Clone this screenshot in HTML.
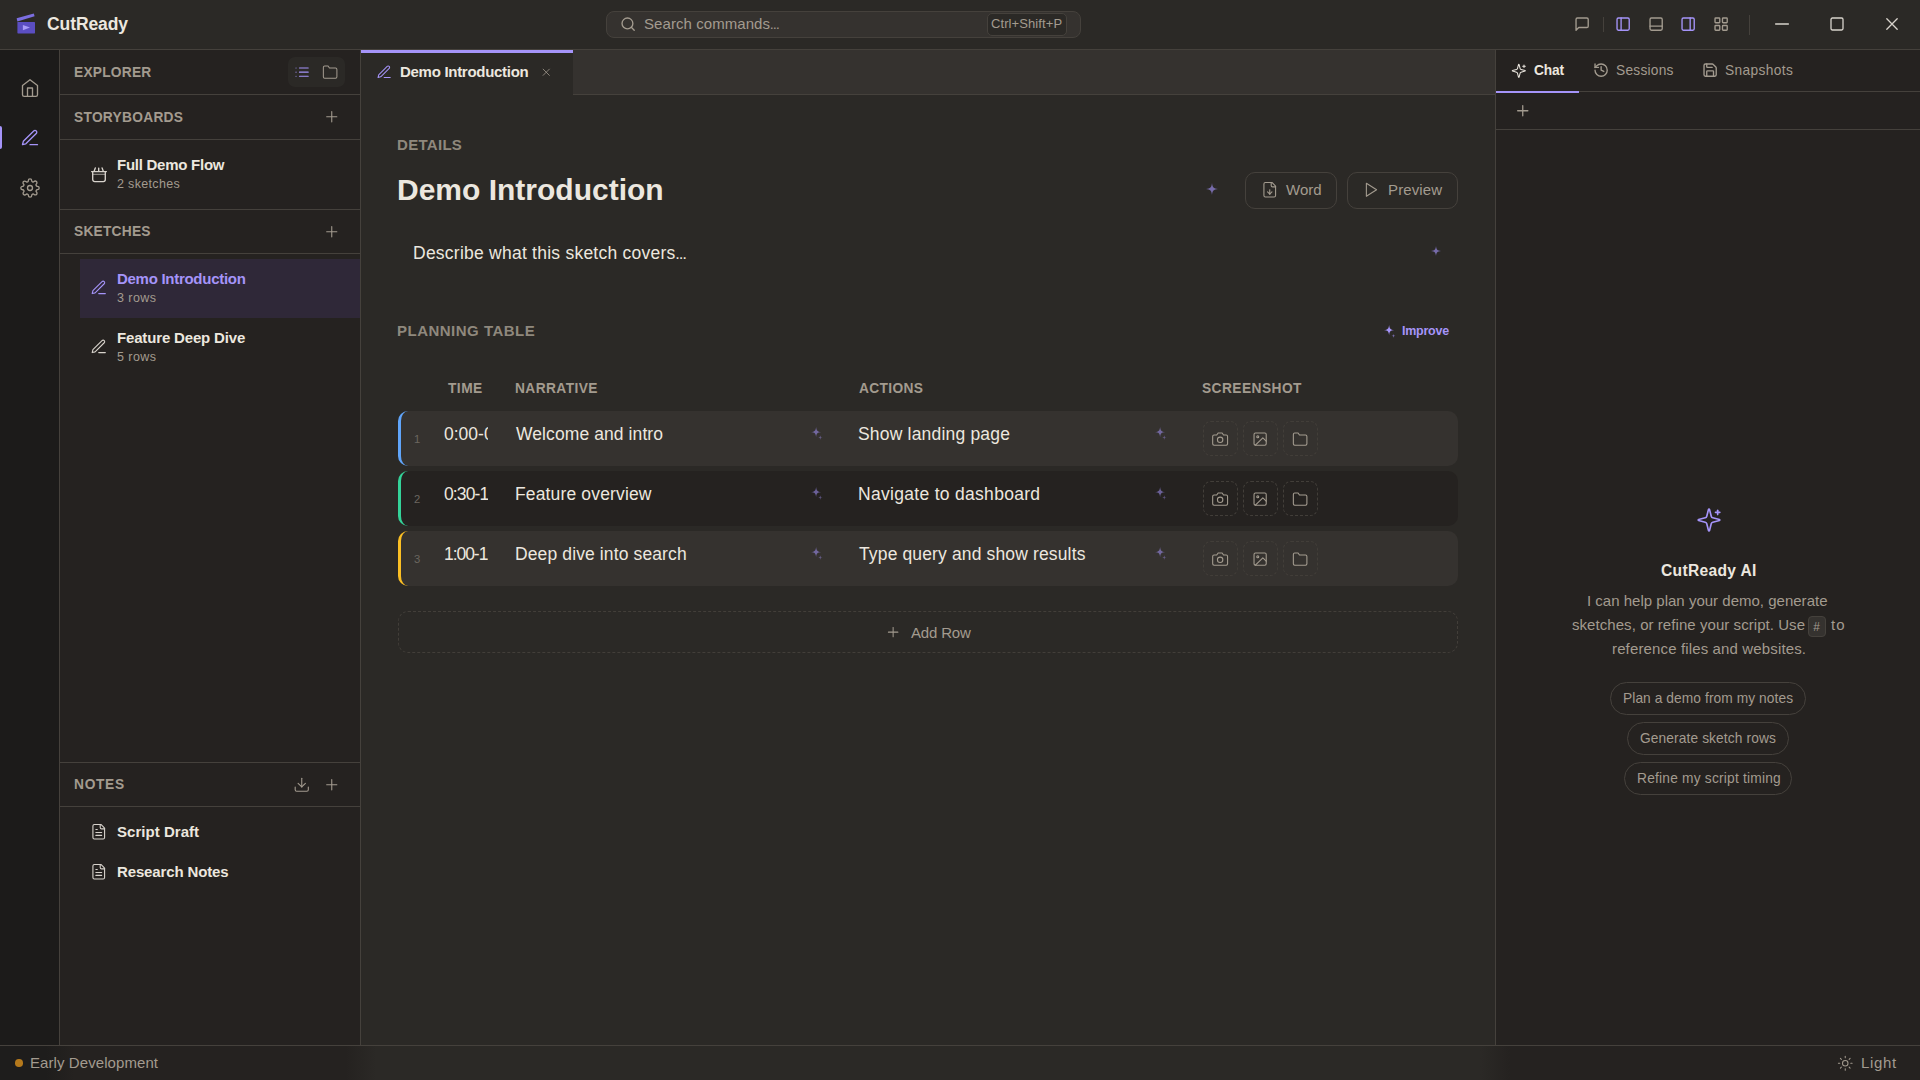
<!DOCTYPE html>
<html lang="en">
<head>
<meta charset="utf-8">
<title>CutReady</title>
<style>
*{box-sizing:border-box;margin:0;padding:0}
html,body{width:1920px;height:1080px;overflow:hidden;background:#2b2926}
body{position:relative;font-family:"Liberation Sans",sans-serif;color:#ece7df;font-size:15px;line-height:1}
.a{position:absolute}
svg{position:absolute;display:block;fill:none;stroke:currentColor;stroke-width:2;stroke-linecap:round;stroke-linejoin:round;overflow:visible}
.t{position:absolute;white-space:nowrap;line-height:1;display:block}
</style>
</head>
<body>
<header>
<div class="a" style="left:0px;top:0px;width:1920px;height:50px;background:#2b2926;border-bottom:1px solid #45413c"></div>
<svg width="24" height="26" viewBox="0 0 24 26" style="left:14px;top:10px;stroke:none"><path d="M2.6 8.3 19.8 3.4 20.6 6.2 3.4 11.5Z" fill="#7b6ee0"/><rect x="3.4" y="12" width="17.6" height="11.4" rx=".6" fill="#5b4ec2"/><path d="M8.9 15 16 17.6 8.9 20.2Z" fill="#a99cf8"/></svg>
<span class="t" style="left:47px;top:16px;font-size:17.5px;color:#ece7df;font-weight:700;letter-spacing:-0.09px">CutReady</span>
<div class="a" style="left:606px;top:11px;width:475px;height:27px;background:#35322f;border:1px solid #45413c;border-radius:8px"></div>
<svg width="16.25" height="16.25" viewBox="0 0 24 24" style="left:619.77px;top:15.57px;color:#a39b8f"><circle cx="11" cy="11" r="8"/><path d="m21 21-4.3-4.3"/></svg>
<span class="t" style="left:644px;top:16px;font-size:15px;color:#a39b8f;letter-spacing:0.07px">Search commands<span style="font-size:.64em;font-weight:700">…</span></span>
<div class="a" style="left:987px;top:13px;width:80px;height:23px;background:#2b2926;border:1px solid #45413c;border-radius:5px"></div>
<span class="t" style="left:991px;top:17px;font-size:13px;color:#a39b8f;letter-spacing:0.09px">Ctrl+Shift+P</span>
<svg width="16.25" height="16.25" viewBox="0 0 24 24" style="left:1574.28px;top:16.38px;color:#a39b8f"><path d="M21 15a2 2 0 0 1-2 2H7l-4 4V5a2 2 0 0 1 2-2h14a2 2 0 0 1 2 2z"/></svg>
<div class="a" style="left:1603px;top:17px;width:1px;height:15px;background:#45413c"></div>
<svg width="16.25" height="16.25" viewBox="0 0 24 24" style="left:1615.28px;top:16.38px;color:#a594f9"><rect width="18" height="18" x="3" y="3" rx="2"/><path d="M9 3v18"/></svg>
<svg width="16.25" height="16.25" viewBox="0 0 24 24" style="left:1648.28px;top:16.38px;color:#a39b8f"><rect width="18" height="18" x="3" y="3" rx="2"/><path d="M3 15h18"/></svg>
<svg width="16.25" height="16.25" viewBox="0 0 24 24" style="left:1680.38px;top:16.38px;color:#a594f9"><rect width="18" height="18" x="3" y="3" rx="2"/><path d="M15 3v18"/></svg>
<svg width="16.25" height="16.25" viewBox="0 0 24 24" style="left:1713.28px;top:16.38px;color:#a39b8f"><rect width="7" height="7" x="3" y="3" rx="1"/><rect width="7" height="7" x="14" y="3" rx="1"/><rect width="7" height="7" x="14" y="14" rx="1"/><rect width="7" height="7" x="3" y="14" rx="1"/></svg>
<div class="a" style="left:1749px;top:15px;width:1px;height:20px;background:#45413c"></div>
<svg width="16" height="16" viewBox="0 0 16 16" style="stroke-width:1.3;left:1774.4px;top:16.4px;color:#d8d3cc"><path d="M1.6 8h12.8"/></svg>
<svg width="16" height="16" viewBox="0 0 16 16" style="stroke-width:1.3;left:1829.3px;top:16.2px;color:#d8d3cc"><rect x="2" y="2" width="12" height="12" rx="1.4"/></svg>
<svg width="16" height="16" viewBox="0 0 16 16" style="stroke-width:1.3;left:1884.3px;top:16.4px;color:#d8d3cc"><path d="m2.8 2.8 10.4 10.4M13.2 2.8 2.8 13.2"/></svg>
</header>
<nav>
<div class="a" style="left:0px;top:50px;width:60px;height:995px;background:#1c1b1a;border-right:1px solid #45413c"></div>
<svg width="20" height="20" viewBox="0 0 24 24" style="left:20px;top:78px;color:#a39b8f;stroke-width:1.6"><path d="m3 9 9-7 9 7v11a2 2 0 0 1-2 2H5a2 2 0 0 1-2-2z"/><path d="M9 22V12h6v10"/></svg>
<div class="a" style="left:0px;top:126px;width:2px;height:23px;background:#a594f9;border-radius:0 2px 2px 0"></div>
<svg width="20" height="20" viewBox="0 0 24 24" style="left:20px;top:128px;color:#a594f9;stroke-width:1.6"><path d="M12 20h9"/><path d="M16.5 3.5a2.121 2.121 0 0 1 3 3L7 19l-4 1 1-4L16.5 3.5z"/></svg>
<svg width="20" height="20" viewBox="0 0 24 24" style="left:20px;top:178px;color:#a39b8f;stroke-width:1.6"><circle cx="12" cy="12" r="3"/><path d="M19.4 15a1.65 1.65 0 0 0 .33 1.82l.06.06a2 2 0 0 1 0 2.83 2 2 0 0 1-2.83 0l-.06-.06a1.65 1.65 0 0 0-1.82-.33 1.65 1.65 0 0 0-1 1.51V21a2 2 0 0 1-2 2 2 2 0 0 1-2-2v-.09A1.65 1.65 0 0 0 9 19.4a1.65 1.65 0 0 0-1.82.33l-.06.06a2 2 0 0 1-2.83 0 2 2 0 0 1 0-2.83l.06-.06a1.65 1.65 0 0 0 .33-1.82 1.65 1.65 0 0 0-1.51-1H3a2 2 0 0 1-2-2 2 2 0 0 1 2-2h.09A1.65 1.65 0 0 0 4.6 9a1.65 1.65 0 0 0-.33-1.82l-.06-.06a2 2 0 0 1 0-2.83 2 2 0 0 1 2.83 0l.06.06a1.65 1.65 0 0 0 1.82.33H9a1.65 1.65 0 0 0 1-1.51V3a2 2 0 0 1 2-2 2 2 0 0 1 2 2v.09a1.65 1.65 0 0 0 1 1.51 1.65 1.65 0 0 0 1.82-.33l.06-.06a2 2 0 0 1 2.83 0 2 2 0 0 1 0 2.83l-.06.06a1.65 1.65 0 0 0-.33 1.82V9a1.65 1.65 0 0 0 1.51 1H21a2 2 0 0 1 2 2 2 2 0 0 1-2 2h-.09a1.65 1.65 0 0 0-1.51 1z"/></svg>
</nav>
<aside>
<div class="a" style="left:60px;top:50px;width:301px;height:995px;background:#252220;border-right:1px solid #45413c"></div>
<div class="a" style="left:60px;top:94px;width:300px;height:1px;background:#45413c"></div>
<div class="a" style="left:60px;top:139px;width:300px;height:1px;background:#45413c"></div>
<div class="a" style="left:60px;top:209px;width:300px;height:1px;background:#45413c"></div>
<div class="a" style="left:60px;top:253px;width:300px;height:1px;background:#45413c"></div>
<div class="a" style="left:60px;top:762px;width:300px;height:1px;background:#45413c"></div>
<div class="a" style="left:60px;top:806px;width:300px;height:1px;background:#45413c"></div>
<span class="t" style="left:74px;top:66px;font-size:13.75px;color:#a39b8f;font-weight:700;letter-spacing:0.23px">EXPLORER</span>
<div class="a" style="left:288px;top:57px;width:57px;height:30px;background:#2b2926;border-radius:7px"></div>
<svg width="16.25" height="16.25" viewBox="0 0 24 24" style="left:294.27px;top:64.47px;color:#a594f9;stroke-width:1.5"><path d="M3 12h.01"/><path d="M3 18h.01"/><path d="M3 6h.01"/><path d="M8 12h13"/><path d="M8 18h13"/><path d="M8 6h13"/></svg>
<svg width="16.25" height="16.25" viewBox="0 0 24 24" style="left:322.18px;top:64.47px;color:#a39b8f;stroke-width:1.5"><path d="M22 19a2 2 0 0 1-2 2H4a2 2 0 0 1-2-2V5a2 2 0 0 1 2-2h5l2 3h9a2 2 0 0 1 2 2z"/></svg>
<span class="t" style="left:74px;top:111px;font-size:13.75px;color:#a39b8f;font-weight:700;letter-spacing:0.28px">STORYBOARDS</span>
<svg width="17.5" height="17.5" viewBox="0 0 24 24" style="left:323.05px;top:107.95px;color:#a39b8f;stroke-width:1.5"><path d="M5 12h14"/><path d="M12 5v14"/></svg>
<svg width="20" height="20" viewBox="0 0 20 20" style="stroke-width:1.35;left:89px;top:165px;color:#d8d3cc"><path d="M3.7 7v7.6a2 2 0 0 0 2 2h8.6a2 2 0 0 0 2-2V7"/><path d="M2.6 6.6h14.8"/><path d="M4 9.3h12" opacity=".55"/><path d="M6.3 3 5.2 6M9.7 3.1V6M13.1 3l1.1 3"/></svg>
<span class="t" style="left:117px;top:157px;font-size:15px;color:#ece7df;font-weight:700;letter-spacing:-0.26px">Full Demo Flow</span>
<span class="t" style="left:117px;top:178px;font-size:12.5px;color:#a39b8f;letter-spacing:0.33px">2 sketches</span>
<span class="t" style="left:74px;top:225px;font-size:13.75px;color:#a39b8f;font-weight:700;letter-spacing:0.23px">SKETCHES</span>
<svg width="17.5" height="17.5" viewBox="0 0 24 24" style="left:323.05px;top:222.95px;color:#a39b8f;stroke-width:1.5"><path d="M5 12h14"/><path d="M12 5v14"/></svg>
<div class="a" style="left:80px;top:259px;width:280px;height:59px;background:#2f2838"></div>
<svg width="17.5" height="17.5" viewBox="0 0 24 24" style="left:90.25px;top:278.65px;color:#a594f9;stroke-width:1.5"><path d="M12 20h9"/><path d="M16.5 3.5a2.121 2.121 0 0 1 3 3L7 19l-4 1 1-4L16.5 3.5z"/></svg>
<span class="t" style="left:117px;top:271px;font-size:15px;color:#a594f9;font-weight:700;letter-spacing:-0.28px">Demo Introduction</span>
<span class="t" style="left:117px;top:292px;font-size:12.5px;color:#a39b8f;letter-spacing:0.44px">3 rows</span>
<svg width="17.5" height="17.5" viewBox="0 0 24 24" style="left:90.25px;top:337.65px;color:#d8d3cc;stroke-width:1.5"><path d="M12 20h9"/><path d="M16.5 3.5a2.121 2.121 0 0 1 3 3L7 19l-4 1 1-4L16.5 3.5z"/></svg>
<span class="t" style="left:117px;top:330px;font-size:15px;color:#ece7df;font-weight:700;letter-spacing:-0.16px">Feature Deep Dive</span>
<span class="t" style="left:117px;top:351px;font-size:12.5px;color:#a39b8f;letter-spacing:0.44px">5 rows</span>
<span class="t" style="left:74px;top:778px;font-size:13.75px;color:#a39b8f;font-weight:700;letter-spacing:0.7px">NOTES</span>
<svg width="17.5" height="17.5" viewBox="0 0 24 24" style="left:292.95px;top:776px;color:#a39b8f;stroke-width:1.5"><path d="M21 15v4a2 2 0 0 1-2 2H5a2 2 0 0 1-2-2v-4"/><path d="m7 10 5 5 5-5"/><path d="M12 15V3"/></svg>
<svg width="17.5" height="17.5" viewBox="0 0 24 24" style="left:323.15px;top:776px;color:#a39b8f;stroke-width:1.5"><path d="M5 12h14"/><path d="M12 5v14"/></svg>
<svg width="17.5" height="17.5" viewBox="0 0 24 24" style="left:90.25px;top:823.25px;color:#d8d3cc;stroke-width:1.5"><path d="M15 2H6a2 2 0 0 0-2 2v16a2 2 0 0 0 2 2h12a2 2 0 0 0 2-2V7Z"/><path d="M14 2v4a2 2 0 0 0 2 2h4"/><path d="M10 9H8"/><path d="M16 13H8"/><path d="M16 17H8"/></svg>
<span class="t" style="left:117px;top:824px;font-size:15px;color:#ece7df;font-weight:700;letter-spacing:0.04px">Script Draft</span>
<svg width="17.5" height="17.5" viewBox="0 0 24 24" style="left:90.25px;top:863.25px;color:#d8d3cc;stroke-width:1.5"><path d="M15 2H6a2 2 0 0 0-2 2v16a2 2 0 0 0 2 2h12a2 2 0 0 0 2-2V7Z"/><path d="M14 2v4a2 2 0 0 0 2 2h4"/><path d="M10 9H8"/><path d="M16 13H8"/><path d="M16 17H8"/></svg>
<span class="t" style="left:117px;top:864px;font-size:15px;color:#ece7df;font-weight:700;letter-spacing:-0.14px">Research Notes</span>
</aside>
<main>
<div class="a" style="left:361px;top:50px;width:1134px;height:45px;background:#35322f;border-bottom:1px solid #45413c"></div>
<div class="a" style="left:361px;top:50px;width:212px;height:45px;background:#2b2926;border-top:3px solid #a594f9"></div>
<svg width="16.25" height="16.25" viewBox="0 0 24 24" style="left:375.88px;top:64.28px;color:#a594f9;stroke-width:1.5"><path d="M12 20h9"/><path d="M16.5 3.5a2.121 2.121 0 0 1 3 3L7 19l-4 1 1-4L16.5 3.5z"/></svg>
<span class="t" style="left:400px;top:64px;font-size:15px;color:#ece7df;font-weight:700;letter-spacing:-0.29px">Demo Introduction</span>
<svg width="12.5" height="12.5" viewBox="0 0 24 24" style="left:540.05px;top:66.25px;color:#a39b8f;stroke-width:1.5"><path d="M18 6 6 18"/><path d="m6 6 12 12"/></svg>
<span class="t" style="left:397px;top:137px;font-size:15px;color:#8f887d;font-weight:700;letter-spacing:0.3px">DETAILS</span>
<h1 style="font-weight:inherit;font-size:inherit"><span class="t" style="left:397px;top:175px;font-size:30px;color:#ece7df;font-weight:700">Demo Introduction</span></h1>
<svg width="24" height="24" style="left:1199.6px;top:176.5px;fill:#a594f9;stroke:none;opacity:0.62"><path transform="translate(12 12) scale(6)" d="M0-1C.09-.26.26-.09 1 0 .26.09.09.26 0 1-.09.26-.26.09-1 0-.26-.09-.09-.26 0-1Z"/></svg>
<div class="a" style="left:1245px;top:172px;width:92px;height:37px;border:1px solid #45413c;border-radius:10px"></div>
<svg width="17.5" height="17.5" viewBox="0 0 24 24" style="left:1260.75px;top:181.25px;color:#a39b8f;stroke-width:1.5"><path d="M15 2H6a2 2 0 0 0-2 2v16a2 2 0 0 0 2 2h12a2 2 0 0 0 2-2V7Z"/><path d="M14 2v4a2 2 0 0 0 2 2h4"/><path d="M12 18v-6"/><path d="m9 15 3 3 3-3"/></svg>
<span class="t" style="left:1286px;top:182px;font-size:15px;color:#a39b8f;letter-spacing:0.05px">Word</span>
<div class="a" style="left:1347px;top:172px;width:111px;height:37px;border:1px solid #45413c;border-radius:10px"></div>
<svg width="17.5" height="17.5" viewBox="0 0 24 24" style="left:1361.85px;top:181.25px;color:#a39b8f;stroke-width:1.5"><path d="M6 3 20 12 6 21z"/></svg>
<span class="t" style="left:1388px;top:182px;font-size:15px;color:#a39b8f;letter-spacing:0.13px">Preview</span>
<span class="t" style="left:413px;top:245px;font-size:17.5px;color:#ece7df;letter-spacing:0.24px">Describe what this sketch covers<span style="font-size:.64em;font-weight:700">…</span></span>
<svg width="22" height="22" style="left:1424.6px;top:240.1px;fill:#a594f9;stroke:none;opacity:0.62"><path transform="translate(11 11) scale(5)" d="M0-1C.09-.26.26-.09 1 0 .26.09.09.26 0 1-.09.26-.26.09-1 0-.26-.09-.09-.26 0-1Z"/></svg>
<span class="t" style="left:397px;top:323px;font-size:15px;color:#8f887d;font-weight:700;letter-spacing:0.49px">PLANNING TABLE</span>
<svg width="22.2" height="22.2" style="left:1378.4px;top:319.1px;fill:#a594f9;stroke:none;opacity:1"><path transform="translate(11.1 11.1) scale(5.1)" d="M0-1C.09-.26.26-.09 1 0 .26.09.09.26 0 1-.09.26-.26.09-1 0-.26-.09-.09-.26 0-1Z"/><path transform="translate(15.5 16.8) scale(2.1)" d="M0-1C.09-.26.26-.09 1 0 .26.09.09.26 0 1-.09.26-.26.09-1 0-.26-.09-.09-.26 0-1Z" opacity="0.6"/></svg>
<span class="t" style="left:1402px;top:325px;font-size:12.5px;color:#a594f9;font-weight:700;letter-spacing:-0.25px">Improve</span>
<span class="t" style="left:448px;top:382px;font-size:13.75px;color:#a39b8f;font-weight:700;letter-spacing:0.47px">TIME</span>
<span class="t" style="left:515px;top:382px;font-size:13.75px;color:#a39b8f;font-weight:700;letter-spacing:0.4px">NARRATIVE</span>
<span class="t" style="left:859px;top:382px;font-size:13.75px;color:#a39b8f;font-weight:700;letter-spacing:0.33px">ACTIONS</span>
<span class="t" style="left:1202px;top:382px;font-size:13.75px;color:#a39b8f;font-weight:700;letter-spacing:0.44px">SCREENSHOT</span>
<div class="a" style="left:398px;top:411px;width:1060px;height:55px;background:#35322f;border-radius:10px;border-left:3px solid #60a5fa"></div>
<span class="t" style="left:414px;top:434px;font-size:11.25px;color:#6b665f">1</span>
<span class="t" style="left:444px;top:426px;font-size:17.5px;color:#ece7df;width:44.1px;overflow:hidden">0:00-0:30</span>
<span class="t" style="left:516px;top:426px;font-size:17.5px;color:#ece7df;letter-spacing:0.09px">Welcome and intro</span>
<span class="t" style="left:858px;top:426px;font-size:17.5px;color:#ece7df;letter-spacing:0.19px">Show landing page</span>
<svg width="22.2" height="22.2" style="left:805.4px;top:421.3px;fill:#a594f9;stroke:none;opacity:0.55"><path transform="translate(11.1 11.1) scale(5.1)" d="M0-1C.09-.26.26-.09 1 0 .26.09.09.26 0 1-.09.26-.26.09-1 0-.26-.09-.09-.26 0-1Z"/><path transform="translate(15.3 16.6) scale(2.4)" d="M0-1C.09-.26.26-.09 1 0 .26.09.09.26 0 1-.09.26-.26.09-1 0-.26-.09-.09-.26 0-1Z" opacity="0.75"/></svg>
<svg width="22.2" height="22.2" style="left:1149.3px;top:421.3px;fill:#a594f9;stroke:none;opacity:0.55"><path transform="translate(11.1 11.1) scale(5.1)" d="M0-1C.09-.26.26-.09 1 0 .26.09.09.26 0 1-.09.26-.26.09-1 0-.26-.09-.09-.26 0-1Z"/><path transform="translate(15.3 16.6) scale(2.4)" d="M0-1C.09-.26.26-.09 1 0 .26.09.09.26 0 1-.09.26-.26.09-1 0-.26-.09-.09-.26 0-1Z" opacity="0.75"/></svg>
<div class="a" style="left:1203px;top:421px;width:35px;height:35px;border:1px dashed #423e39;border-radius:8px"></div>
<svg width="16.25" height="16.25" viewBox="0 0 24 24" style="left:1211.97px;top:431.07px;color:#a39b8f;stroke-width:1.6"><path d="M23 19a2 2 0 0 1-2 2H3a2 2 0 0 1-2-2V8a2 2 0 0 1 2-2h4l2-3h6l2 3h4a2 2 0 0 1 2 2z"/><circle cx="12" cy="13" r="4"/></svg>
<div class="a" style="left:1243px;top:421px;width:35px;height:35px;border:1px dashed #423e39;border-radius:8px"></div>
<svg width="16.25" height="16.25" viewBox="0 0 24 24" style="left:1251.97px;top:431.07px;color:#a39b8f;stroke-width:1.6"><rect x="3" y="3" width="18" height="18" rx="2" ry="2"/><circle cx="8.5" cy="8.5" r="1.5"/><path d="m21 15-5-5L5 21"/></svg>
<div class="a" style="left:1283px;top:421px;width:35px;height:35px;border:1px dashed #423e39;border-radius:8px"></div>
<svg width="16.25" height="16.25" viewBox="0 0 24 24" style="left:1291.97px;top:431.07px;color:#a39b8f;stroke-width:1.6"><path d="M22 19a2 2 0 0 1-2 2H4a2 2 0 0 1-2-2V5a2 2 0 0 1 2-2h5l2 3h9a2 2 0 0 1 2 2z"/></svg>
<div class="a" style="left:398px;top:471px;width:1060px;height:55px;background:#252220;border-radius:10px;border-left:3px solid #34d399"></div>
<span class="t" style="left:414px;top:494px;font-size:11.25px;color:#6b665f">2</span>
<span class="t" style="left:444px;top:486px;font-size:17.5px;color:#ece7df;letter-spacing:-0.9px;width:44.1px;overflow:hidden">0:30-1:00</span>
<span class="t" style="left:515px;top:486px;font-size:17.5px;color:#ece7df;letter-spacing:0.15px">Feature overview</span>
<span class="t" style="left:858px;top:486px;font-size:17.5px;color:#ece7df;letter-spacing:0.3px">Navigate to dashboard</span>
<svg width="22.2" height="22.2" style="left:805.4px;top:481.3px;fill:#a594f9;stroke:none;opacity:0.55"><path transform="translate(11.1 11.1) scale(5.1)" d="M0-1C.09-.26.26-.09 1 0 .26.09.09.26 0 1-.09.26-.26.09-1 0-.26-.09-.09-.26 0-1Z"/><path transform="translate(15.3 16.6) scale(2.4)" d="M0-1C.09-.26.26-.09 1 0 .26.09.09.26 0 1-.09.26-.26.09-1 0-.26-.09-.09-.26 0-1Z" opacity="0.75"/></svg>
<svg width="22.2" height="22.2" style="left:1149.3px;top:481.3px;fill:#a594f9;stroke:none;opacity:0.55"><path transform="translate(11.1 11.1) scale(5.1)" d="M0-1C.09-.26.26-.09 1 0 .26.09.09.26 0 1-.09.26-.26.09-1 0-.26-.09-.09-.26 0-1Z"/><path transform="translate(15.3 16.6) scale(2.4)" d="M0-1C.09-.26.26-.09 1 0 .26.09.09.26 0 1-.09.26-.26.09-1 0-.26-.09-.09-.26 0-1Z" opacity="0.75"/></svg>
<div class="a" style="left:1203px;top:481px;width:35px;height:35px;border:1px dashed #423e39;border-radius:8px"></div>
<svg width="16.25" height="16.25" viewBox="0 0 24 24" style="left:1211.97px;top:491.07px;color:#a39b8f;stroke-width:1.6"><path d="M23 19a2 2 0 0 1-2 2H3a2 2 0 0 1-2-2V8a2 2 0 0 1 2-2h4l2-3h6l2 3h4a2 2 0 0 1 2 2z"/><circle cx="12" cy="13" r="4"/></svg>
<div class="a" style="left:1243px;top:481px;width:35px;height:35px;border:1px dashed #423e39;border-radius:8px"></div>
<svg width="16.25" height="16.25" viewBox="0 0 24 24" style="left:1251.97px;top:491.07px;color:#a39b8f;stroke-width:1.6"><rect x="3" y="3" width="18" height="18" rx="2" ry="2"/><circle cx="8.5" cy="8.5" r="1.5"/><path d="m21 15-5-5L5 21"/></svg>
<div class="a" style="left:1283px;top:481px;width:35px;height:35px;border:1px dashed #423e39;border-radius:8px"></div>
<svg width="16.25" height="16.25" viewBox="0 0 24 24" style="left:1291.97px;top:491.07px;color:#a39b8f;stroke-width:1.6"><path d="M22 19a2 2 0 0 1-2 2H4a2 2 0 0 1-2-2V5a2 2 0 0 1 2-2h5l2 3h9a2 2 0 0 1 2 2z"/></svg>
<div class="a" style="left:398px;top:531px;width:1060px;height:55px;background:#35322f;border-radius:10px;border-left:3px solid #fbbf24"></div>
<span class="t" style="left:414px;top:554px;font-size:11.25px;color:#6b665f">3</span>
<span class="t" style="left:444px;top:546px;font-size:17.5px;color:#ece7df;letter-spacing:-1.05px;width:44.1px;overflow:hidden">1:00-1:30</span>
<span class="t" style="left:515px;top:546px;font-size:17.5px;color:#ece7df;letter-spacing:0.12px">Deep dive into search</span>
<span class="t" style="left:859px;top:546px;font-size:17.5px;color:#ece7df;letter-spacing:0.14px">Type query and show results</span>
<svg width="22.2" height="22.2" style="left:805.4px;top:541.3px;fill:#a594f9;stroke:none;opacity:0.55"><path transform="translate(11.1 11.1) scale(5.1)" d="M0-1C.09-.26.26-.09 1 0 .26.09.09.26 0 1-.09.26-.26.09-1 0-.26-.09-.09-.26 0-1Z"/><path transform="translate(15.3 16.6) scale(2.4)" d="M0-1C.09-.26.26-.09 1 0 .26.09.09.26 0 1-.09.26-.26.09-1 0-.26-.09-.09-.26 0-1Z" opacity="0.75"/></svg>
<svg width="22.2" height="22.2" style="left:1149.3px;top:541.3px;fill:#a594f9;stroke:none;opacity:0.55"><path transform="translate(11.1 11.1) scale(5.1)" d="M0-1C.09-.26.26-.09 1 0 .26.09.09.26 0 1-.09.26-.26.09-1 0-.26-.09-.09-.26 0-1Z"/><path transform="translate(15.3 16.6) scale(2.4)" d="M0-1C.09-.26.26-.09 1 0 .26.09.09.26 0 1-.09.26-.26.09-1 0-.26-.09-.09-.26 0-1Z" opacity="0.75"/></svg>
<div class="a" style="left:1203px;top:541px;width:35px;height:35px;border:1px dashed #423e39;border-radius:8px"></div>
<svg width="16.25" height="16.25" viewBox="0 0 24 24" style="left:1211.97px;top:551.08px;color:#a39b8f;stroke-width:1.6"><path d="M23 19a2 2 0 0 1-2 2H3a2 2 0 0 1-2-2V8a2 2 0 0 1 2-2h4l2-3h6l2 3h4a2 2 0 0 1 2 2z"/><circle cx="12" cy="13" r="4"/></svg>
<div class="a" style="left:1243px;top:541px;width:35px;height:35px;border:1px dashed #423e39;border-radius:8px"></div>
<svg width="16.25" height="16.25" viewBox="0 0 24 24" style="left:1251.97px;top:551.08px;color:#a39b8f;stroke-width:1.6"><rect x="3" y="3" width="18" height="18" rx="2" ry="2"/><circle cx="8.5" cy="8.5" r="1.5"/><path d="m21 15-5-5L5 21"/></svg>
<div class="a" style="left:1283px;top:541px;width:35px;height:35px;border:1px dashed #423e39;border-radius:8px"></div>
<svg width="16.25" height="16.25" viewBox="0 0 24 24" style="left:1291.97px;top:551.08px;color:#a39b8f;stroke-width:1.6"><path d="M22 19a2 2 0 0 1-2 2H4a2 2 0 0 1-2-2V5a2 2 0 0 1 2-2h5l2 3h9a2 2 0 0 1 2 2z"/></svg>
<div class="a" style="left:398px;top:611px;width:1060px;height:42px;border:1px dashed #423e39;border-radius:10px"></div>
<svg width="16.25" height="16.25" viewBox="0 0 24 24" style="left:885.17px;top:624.38px;color:#a39b8f;stroke-width:1.5"><path d="M5 12h14"/><path d="M12 5v14"/></svg>
<span class="t" style="left:911px;top:625px;font-size:15px;color:#a39b8f;letter-spacing:-0.17px">Add Row</span>
</main>
<section>
<div class="a" style="left:1495px;top:50px;width:425px;height:995px;background:#252220;border-left:1px solid #45413c"></div>
<div class="a" style="left:1496px;top:91px;width:424px;height:1px;background:#45413c"></div>
<div class="a" style="left:1496px;top:129px;width:424px;height:1px;background:#45413c"></div>
<div class="a" style="left:1496px;top:91px;width:83px;height:2px;background:#a594f9"></div>
<svg width="15.6" height="15.6" viewBox="0 0 24 24" style="left:1511px;top:62.8px;color:#ece7df;stroke-width:1.6"><path d="M9.937 15.5A2 2 0 0 0 8.5 14.063l-6.135-1.582a.5.5 0 0 1 0-.962L8.5 9.936A2 2 0 0 0 9.937 8.5l1.582-6.135a.5.5 0 0 1 .963 0L14.063 8.5A2 2 0 0 0 15.5 9.937l6.135 1.581a.5.5 0 0 1 0 .964L15.5 14.063a2 2 0 0 0-1.437 1.437l-1.582 6.135a.5.5 0 0 1-.963 0z"/><path d="M20 3v4"/><path d="M22 5h-4"/></svg>
<span class="t" style="left:1534px;top:64px;font-size:13.75px;color:#ece7df;font-weight:700;letter-spacing:-0.17px">Chat</span>
<svg width="16.25" height="16.25" viewBox="0 0 24 24" style="left:1593.38px;top:62.47px;color:#a39b8f"><path d="M3 12a9 9 0 1 0 9-9 9.75 9.75 0 0 0-6.74 2.74L3 8"/><path d="M3 3v5h5"/><path d="M12 7v5l4 2"/></svg>
<span class="t" style="left:1616px;top:64px;font-size:13.75px;color:#a39b8f;letter-spacing:0.23px">Sessions</span>
<svg width="16.25" height="16.25" viewBox="0 0 24 24" style="left:1702.38px;top:62.47px;color:#a39b8f"><path d="M15.2 3a2 2 0 0 1 1.4.6l3.8 3.8a2 2 0 0 1 .6 1.4V19a2 2 0 0 1-2 2H5a2 2 0 0 1-2-2V5a2 2 0 0 1 2-2z"/><path d="M17 21v-7a1 1 0 0 0-1-1H8a1 1 0 0 0-1 1v7"/><path d="M7 3v4a1 1 0 0 0 1 1h7"/></svg>
<span class="t" style="left:1725px;top:64px;font-size:13.75px;color:#a39b8f;letter-spacing:0.36px">Snapshots</span>
<svg width="17.5" height="17.5" viewBox="0 0 24 24" style="left:1513.95px;top:102.05px;color:#a39b8f;stroke-width:1.75"><path d="M5 12h14"/><path d="M12 5v14"/></svg>
<svg width="26" height="26" viewBox="0 0 24 24" style="left:1695.6px;top:506.6px;color:#a594f9;stroke-width:1.5"><path d="M9.937 15.5A2 2 0 0 0 8.5 14.063l-6.135-1.582a.5.5 0 0 1 0-.962L8.5 9.936A2 2 0 0 0 9.937 8.5l1.582-6.135a.5.5 0 0 1 .963 0L14.063 8.5A2 2 0 0 0 15.5 9.937l6.135 1.581a.5.5 0 0 1 0 .964L15.5 14.063a2 2 0 0 0-1.437 1.437l-1.582 6.135a.5.5 0 0 1-.963 0z"/><path d="M20 3v4"/><path d="M22 5h-4"/></svg>
<span class="t" style="left:1661px;top:563px;font-size:15.6px;color:#ece7df;font-weight:700;letter-spacing:0.32px">CutReady AI</span>
<span class="t" style="left:1587px;top:593px;font-size:15px;color:#a39b8f;letter-spacing:0.01px">I can help plan your demo, generate</span>
<span class="t" style="left:1572px;top:617px;font-size:15px;color:#a39b8f;letter-spacing:0.06px">sketches, or refine your script. Use</span>
<div class="a" style="left:1808px;top:616px;width:18px;height:21px;background:#35322f;border:1px solid #45413c;border-radius:4px"></div>
<span class="t" style="left:1813px;top:623px;font-size:11.9px;color:#a39b8f;font-family:'Liberation Mono',monospace">#</span>
<span class="t" style="left:1831px;top:617px;font-size:15px;color:#a39b8f;letter-spacing:1.1px">to</span>
<span class="t" style="left:1612px;top:641px;font-size:15px;color:#a39b8f;letter-spacing:0.14px">reference files and websites.</span>
<div class="a" style="left:1610px;top:682px;width:196px;height:33px;border:1px solid #45413c;border-radius:17px"></div>
<span class="t" style="left:1623px;top:692px;font-size:13.75px;color:#a39b8f;letter-spacing:0.08px">Plan a demo from my notes</span>
<div class="a" style="left:1627px;top:722px;width:162px;height:33px;border:1px solid #45413c;border-radius:17px"></div>
<span class="t" style="left:1640px;top:732px;font-size:13.75px;color:#a39b8f;letter-spacing:0.11px">Generate sketch rows</span>
<div class="a" style="left:1624px;top:762px;width:168px;height:33px;border:1px solid #45413c;border-radius:17px"></div>
<span class="t" style="left:1637px;top:772px;font-size:13.75px;color:#a39b8f;letter-spacing:0.21px">Refine my script timing</span>
</section>
<footer>
<div class="a" style="left:0px;top:1045px;width:1920px;height:35px;border-top:1px solid #45413c;background:linear-gradient(to right,#1e1d1c 0,#1e1d1c 46px,#252220 74px,#252220 346px,#2b2926 376px,#2b2926 1480px,#252220 1510px)"></div>
<div class="a" style="left:15.2px;top:1059.2px;width:7.6px;height:7.6px;background:#b5791c;border-radius:50%"></div>
<span class="t" style="left:30px;top:1055px;font-size:15px;color:#a39b8f;letter-spacing:0.08px">Early Development</span>
<svg width="16.5" height="16.5" viewBox="0 0 24 24" style="left:1837.25px;top:1055.25px;color:#a39b8f;stroke-width:1.5"><circle cx="12" cy="12" r="4"/><path d="M12 2v2"/><path d="M12 20v2"/><path d="m4.93 4.93 1.41 1.41"/><path d="m17.66 17.66 1.41 1.41"/><path d="M2 12h2"/><path d="M20 12h2"/><path d="m6.34 17.66-1.41 1.41"/><path d="m19.07 4.93-1.41 1.41"/></svg>
<span class="t" style="left:1861px;top:1055px;font-size:15px;color:#a39b8f;letter-spacing:0.68px">Light</span>
</footer>
</body>
</html>
